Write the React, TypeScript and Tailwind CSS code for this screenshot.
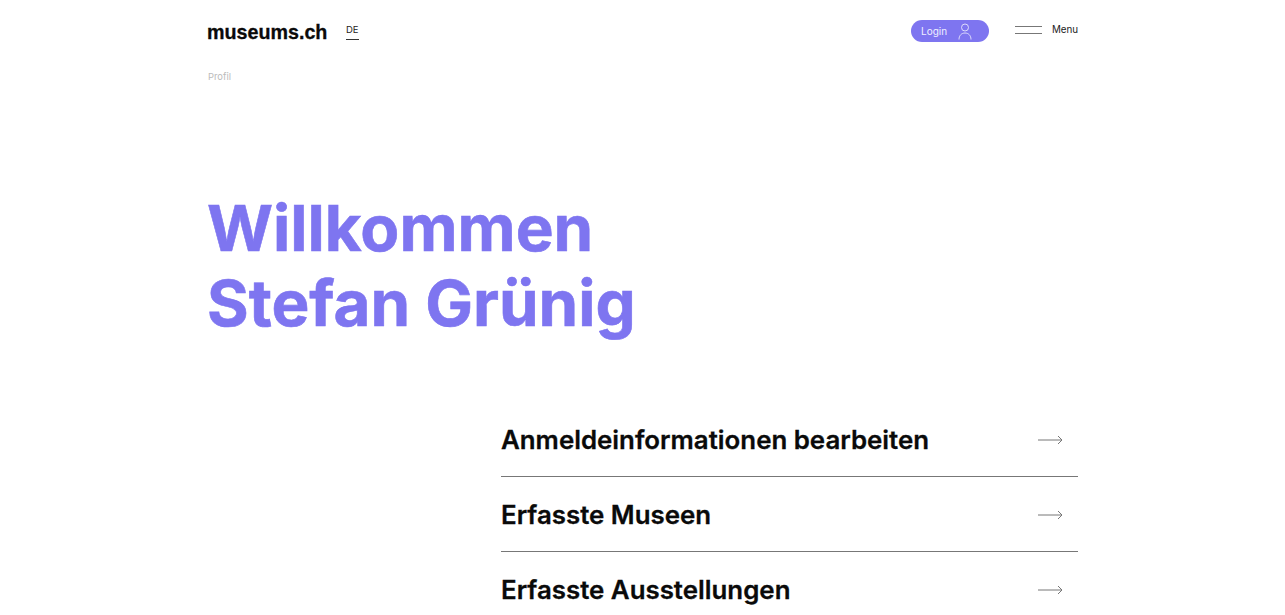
export default function App() {
  const rows = ["Anmeldeinformationen bearbeiten", "Erfasste Museen", "Erfasste Ausstellungen"];
  return (
    <div className="w-full h-[615px] overflow-hidden bg-white font-['Inter',sans-serif]">
      <div className="w-[871px] ml-[207px]">
        <header className="flex items-start h-[68px] pt-[20px]">
          <div className="text-[19.7px] leading-[24px] font-bold text-[#0a0a0a] w-[139px] font-['Liberation_Sans',sans-serif] [-webkit-text-stroke:0.3px_#0a0a0a]">museums.ch</div>
          <div className="text-[9.5px] leading-[20px] text-[#222] border-b border-[#333] h-[20px]">DE</div>
          <div className="ml-auto flex items-center">
            <div className="flex items-center justify-between w-[78px] h-[22px] rounded-full bg-[#7e75f0] pl-[10px] pr-[17px] text-[#f0efff] text-[10px]">
              <span>Login</span>
              <svg width="14" height="17" viewBox="0 0 14 17" fill="none" stroke="#e6e4fc" strokeWidth="0.9">
                <circle cx="7" cy="4.500" r="3.500" />
                <path d="M1 16.500c0-4 2.500-6.500 6-6.500s6 2.500 6 6.500" />
              </svg>
            </div>
            <div className="ml-[26px] w-[27px] h-[8px] border-y border-[#777] -translate-y-[1px]" />
            <span className="ml-[10px] w-[26px] whitespace-nowrap text-[9.8px] leading-[20px] text-[#222] -translate-y-[1px]">Menu</span>
          </div>
        </header>
        <div className="text-[9.4px] leading-[16px] text-[#bbb] pl-[1px] pt-[1px]">Profil</div>
        <h1 className="mt-[105px] text-[63.7px] leading-[75px] font-bold text-[#7e75f0] [-webkit-text-stroke:0.6px_#7e75f0]">
          Willkommen
          <br />
          Stefan Grünig
        </h1>
        <div className="mt-[62px] ml-[294px]">
          {rows.map((r) => (
            <div key={r} className="flex items-center justify-between h-[75px] border-b border-[#777] pr-[15px]">
              <span className="text-[25.85px] font-semibold text-[#0a0a0a] translate-y-[1px] [-webkit-text-stroke:0.3px_#0a0a0a]">{r}</span>
              <svg className="translate-y-[1px]" width="26" height="10" viewBox="0 0 26 10" fill="none" stroke="#777" strokeWidth="1">
                <path d="M1 5h24M21 1l4 4-4 4" />
              </svg>
            </div>
          ))}
        </div>
      </div>
    </div>
  );
}
